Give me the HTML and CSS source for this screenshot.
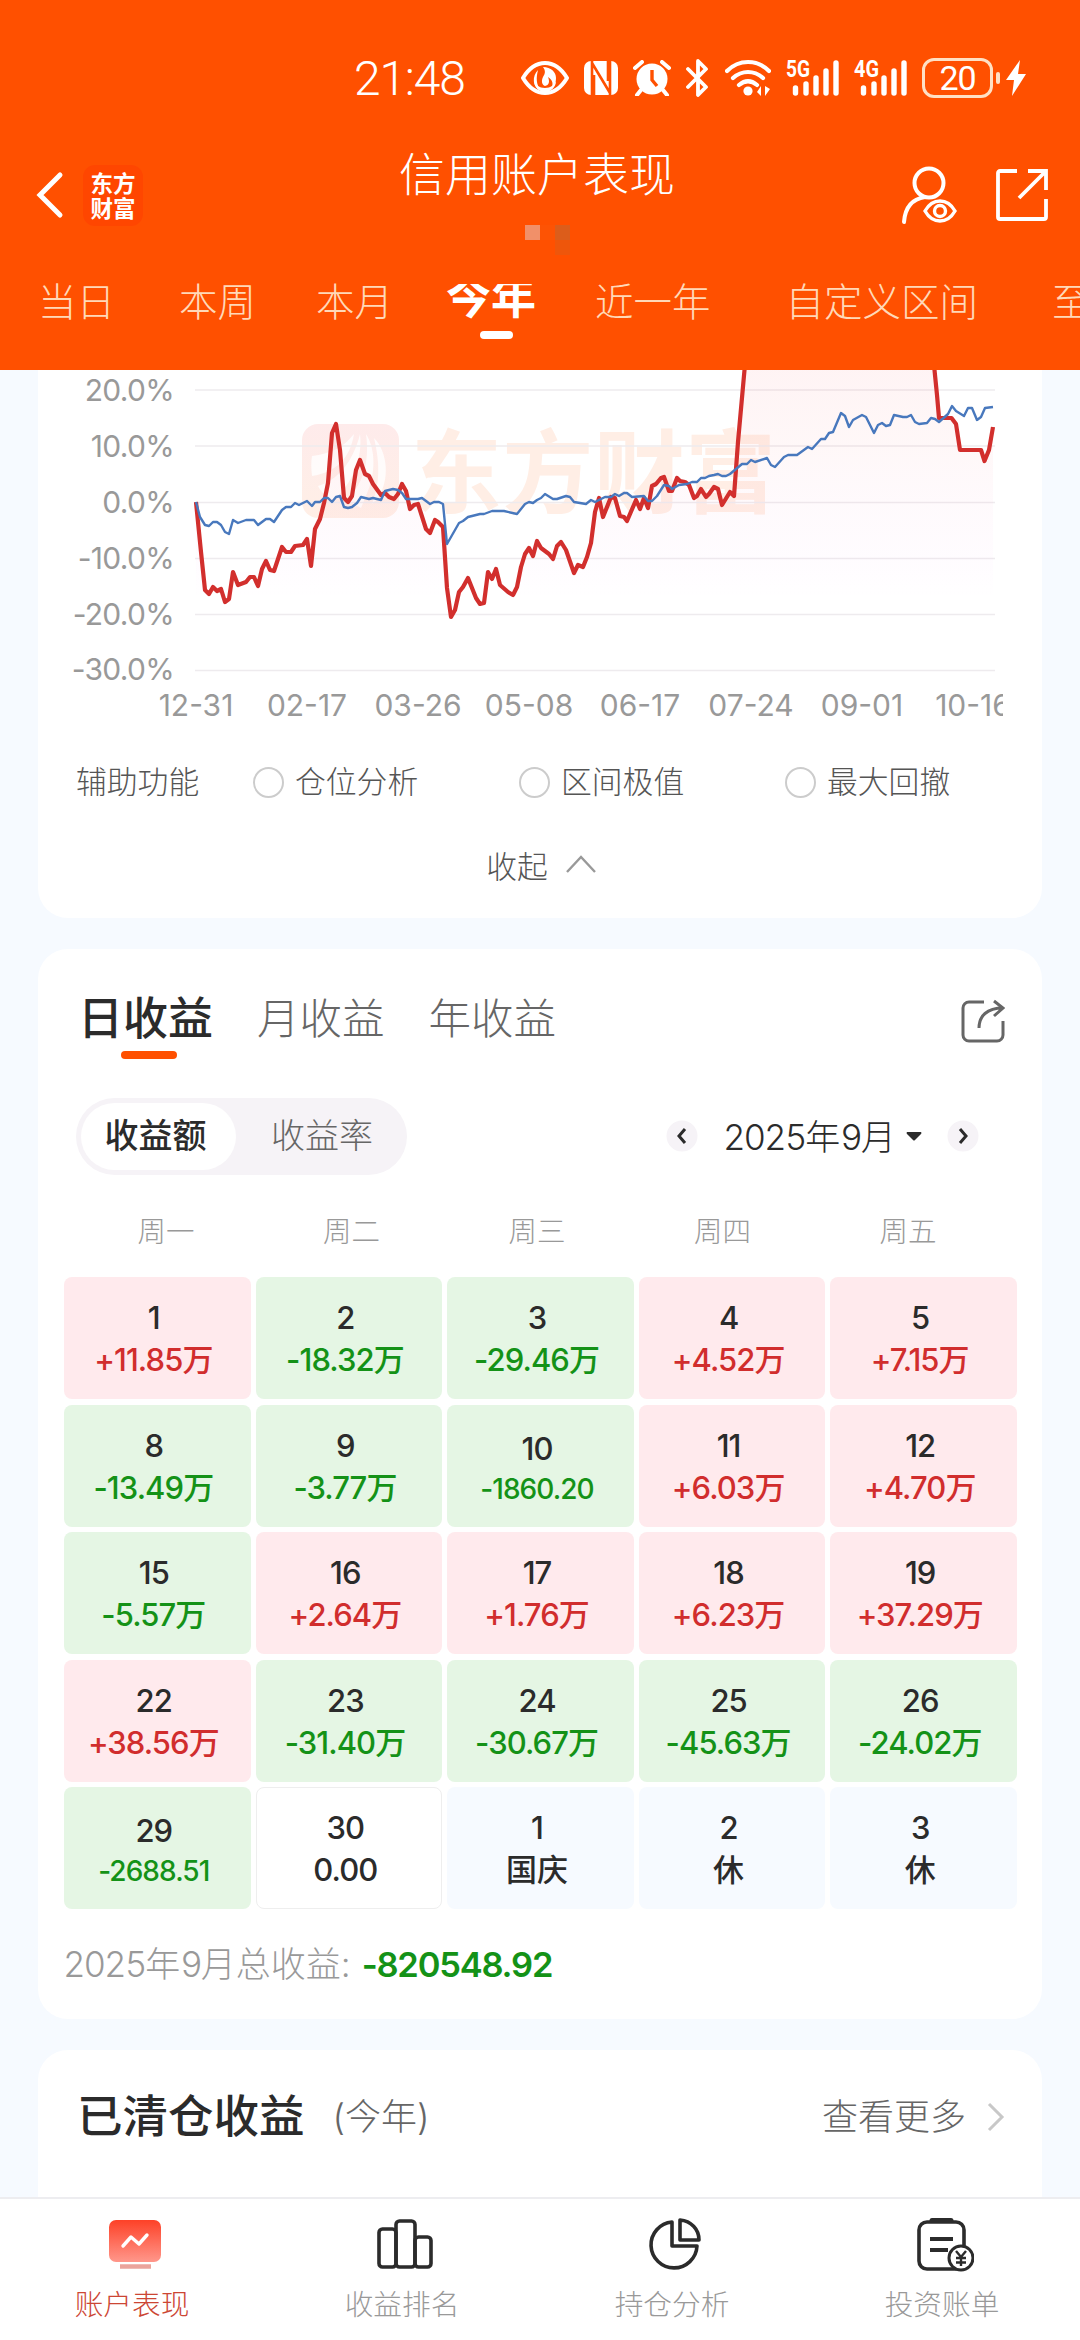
FILE: index.html
```html
<!DOCTYPE html>
<html lang="zh-CN">
  <head>
    <meta charset="UTF-8" />
    <meta name="viewport" content="width=device-width, initial-scale=1.0" />
    <title>信用账户表现</title>
    <link rel="stylesheet" href="styles.css">
  </head>
  <body>
    <header class="header">
      <div class="status-bar">
        <span class="clock">21:48</span>
        <svg class="eye" width="48" height="36" viewBox="0 0 48 36">
          <path d="M2 18C8 8 15 3 24 3s16 5 22 15c-6 10-13 15-22 15S8 28 2 18z" fill="none" stroke="#fff" stroke-width="4" stroke-linejoin="round" />
          <path d="M22 7c3 4 2 7 0 10-2 4-1 8 2 9 4-1 5-4 3-9 5 3 5 7 4 10 3-2 4-5 4-9 0-6-5-11-13-11zM17 10c-6 6-6 17 3 21-5-7-5-13-3-21z" fill="#fff" />
          <path d="M13 20c0 7 5 12 11 12s11-5 11-11c-2 4-5 7-11 7s-9-3-11-8z" fill="#fff" />
        </svg>
        <svg width="34" height="36" viewBox="0 0 34 36">
          <rect y="1" width="34" height="34" rx="7" fill="#fff" />
          <path d="M8 1v34M26 1v34M8 3l18 30M10 15v20M24 1v20" fill="none" stroke="#ff5000" stroke-width="2.6" />
        </svg>
        <svg width="38" height="36" viewBox="0 0 38 36">
          <circle cx="19" cy="19" r="15.500" fill="#fff" />
          <path d="M2 8l7-6M36 8l-7-6M8 30l-4 5M30 30l4 5" stroke="#fff" stroke-width="4" stroke-linecap="round" />
          <path d="M19 10v10l5 6" fill="none" stroke="#ff5000" stroke-width="3.400" />
        </svg>
        <svg width="24" height="38" viewBox="0 0 24 38">
          <path d="M2 10l18 18-8 8V2l8 8L2 28" fill="none" stroke="#fff" stroke-width="3.800" stroke-linejoin="round" stroke-linecap="round" />
        </svg>
        <svg width="46" height="38" viewBox="0 0 46 38">
          <path d="M2 12c12-12 30-12 42 0M8 19c9-8 21-8 30 0M14 26c6-5 12-5 18 0" fill="none" stroke="#fff" stroke-width="4.200" stroke-linecap="round" />
          <circle cx="23" cy="32" r="4.600" fill="#fff" />
          <path d="M36 27v10l-4-4zM40 27v10l5-7z" fill="#fff" />
        </svg>
        <svg class="signal" width="53" height="38" viewBox="0 0 53 38">
          <text class="net" x="0" y="18" textLength="24" lengthAdjust="spacingAndGlyphs">5G</text>
          <path d="M9.500 29v5M20 25v9M30 19v15M40 12v22M50 4v30" stroke="#fff" stroke-width="5.400" stroke-linecap="round" />
        </svg>
        <svg class="signal" width="53" height="38" viewBox="0 0 53 38">
          <text class="net" x="0" y="18" textLength="25" lengthAdjust="spacingAndGlyphs">4G</text>
          <path d="M9.500 29v5M20 25v9M30 19v15M40 12v22M50 4v30" stroke="#fff" stroke-width="5.400" stroke-linecap="round" />
        </svg>
        <span class="battery">20</span>
        <svg class="bolt" width="20" height="38" viewBox="0 0 20 38">
          <path d="M14 1L0 21h8L6 37l14-22h-8z" fill="#fff" />
        </svg>
      </div>

      <div class="title-bar">
        <svg class="back" width="28" height="48" viewBox="0 0 28 48">
          <path d="M24 4L4 24l20 20" fill="none" stroke="#fff" stroke-width="5" stroke-linecap="round" />
        </svg>
        <div class="brand"><span>东方</span><span>财富</span></div>
        <div class="title">
          <h1>信用账户表现</h1>
          <div class="blocks"><i></i><i></i><i></i><i></i></div>
        </div>
        <svg class="person" width="58" height="60" viewBox="0 0 58 60">
          <g fill="none" stroke="#fff" stroke-width="4">
            <circle cx="28" cy="18" r="14.500" />
            <path d="M3 57c1-14 8-23 21-25" stroke-linecap="round" />
            <path d="M24 46c4-7 9-10 15-10s11 3 15 10c-4 7-9 10-15 10s-11-3-15-10z" stroke-width="3.400" />
            <circle cx="39" cy="46" r="5.500" stroke-width="3.400" />
          </g>
        </svg>
        <svg class="open" width="54" height="54" viewBox="0 0 54 54">
          <path d="M22 3H5a2 2 0 0 0-2 2v44a2 2 0 0 0 2 2h44a2 2 0 0 0 2-2V31M33 3h18v19M50 4L24 30" fill="none" stroke="#fff" stroke-width="3.800" />
        </svg>
      </div>

      <nav class="periods">
        <span>当日</span>
        <span>本周</span>
        <span>本月</span>
        <span class="current"><b>今年</b></span>
        <span>近一年</span>
        <span>自定义区间</span>
        <span>至</span>
      </nav>
    </header>

    <main>
      <section class="card chart-card">
        <svg class="chart" width="1004" height="360" viewBox="38 370 1004 360">
          <defs>
            <linearGradient id="area" gradientUnits="userSpaceOnUse" x1="0" y1="370" x2="0" y2="600">
              <stop offset="0" stop-color="#f8303c" stop-opacity="0.055" />
              <stop offset="0.35" stop-color="#f8303c" stop-opacity="0.035" />
              <stop offset="0.85" stop-color="#f040f0" stop-opacity="0.015" />
              <stop offset="1" stop-color="#f040f0" stop-opacity="0" />
            </linearGradient>
            <linearGradient id="mark" x1="0" y1="0" x2="0" y2="1">
              <stop offset="0" stop-color="#feebeb" />
              <stop offset="1" stop-color="#ffefe6" />
            </linearGradient>
            <clipPath id="labels"><rect x="38" y="680" width="965" height="50" /></clipPath>
          </defs>

          <rect x="302" y="424" width="97" height="94" rx="16" fill="url(#mark)" />
          <path d="M312 456c18-2 32-9 42-22-4 24-17 38-42 42-1-8-1-14 0-20zM318 486c20-6 35-24 42-52 3 24-8 50-26 66-8-3-13-8-16-14zM346 500c16-14 24-36 20-66 10 16 10 40 0 62l-5 12zM374 438c14 14 16 42 4 60l-6 6c8-20 8-42 2-66z" fill="#fff" opacity=".8" />
          <text class="watermark" x="411" y="506" textLength="365">东方财富</text>

          <path class="grid" d="M195 390H995M195 446H995M195 502.500H995M195 558.500H995M195 614.500H995M195 670.500H995" />

          <path fill="url(#area)" d="M196 502L201 552 205 590 229 599 233 572 274 571 282 547 303 545 311 566 320 519 328 483 332 433 336 424 340 450 344 498 352 496 360 460 373 484 381 495 394 499 402 484 410 509 418 504 430 533 443 527 447 588 480 604 513 595 525 554 537 541 553 559 561 542 574 573 583 567 591 543 599 498 603 517 615 498 627 521 640 505 648 508 656 484 664 477 680 481 694 498 714 487 722 505 734 496 738 442 744.500 370V350H932L937 395 939 418H951L960 450H981L984 461 993 427V600H196Z" />
          <polyline class="mine" points="196,502 201,552 205,590 209,594 213,587 217,591 221,589 225,602 229,599 233,572 238,585 246,582 250,577 254,577 258,586 262,569 266,561 270,570 274,571 282,547 286,552 291,552 295,546 303,545 307,539 311,566 315,529 320,519 324,503 328,483 332,433 336,424 340,450 344,498 348,502 352,496 356,470 360,460 365,474 369,476 373,484 381,495 385,493 389,497 394,499 398,494 402,484 406,491 410,509 414,505 418,504 426,529 430,533 435,520 438,522 443,527 447,588 451,617 455,610 459,592 463,587 468,578 476,598 480,604 484,603 488,572 492,579 496,569 500,585 508,592 513,595 517,587 521,567 525,554 529,548 533,556 537,541 541,548 549,554 553,559 557,546 561,542 566,550 574,573 578,565 583,567 587,557 591,543 595,512 599,498 603,517 611,497 615,498 620,516 624,517 627,521 636,500 640,509 644,498 648,508 652,486 656,484 661,478 664,477 669,491 672,491 677,478 680,481 685,482 689,485 694,498 697,496 701,489 706,497 709,494 714,487 718,489 722,505 730,492 734,496 738,442 744.500,370 747,330 932,330 934.500,370 937,395 939,418 951.500,418 956,424 960,450 981,450 984.500,461 989,450 993,427" />
          <polyline class="index" points="196,502 200,517 205,525 209,526 213,522 217,522 221,525 225,532 229,534 233,520 238,523 246,520 254,520 258,525 266,519 270,519 274,522 282,510 286,507 291,507 295,503 299,505 307,501 312,506 315,502 320,502 324,498 328,498 332,502 336,497 340,496 344,507 348,508 352,507 357,503 361,497 369,499 373,498 381,500 385,491 393,489 398,490 402,493 406,499 418,499 422,498 430,504 434,502 439,502 443,504 447,544 451,537 459,523 463,521 468,517 480,514 484,514 492,511 504,511 517,514 525,504 529,502 533,503 537,500 541,498 545,494 553,499 557,499 566,496 570,497 574,502 586,504 591,500 595,502 605,497 611,497 615,494 619,496 624,493 627,493 632,497 644,496 648,501 652,501 657,496 664,485 669,486 672,489 679,485 687,484 692,482 697,482 701,478 705,478 709,476 714,475 718,474 722,476 726,476 730,474 742,464 747,464 751,460 755,462 767,458 771,465 775,467 784,457 788,455 797,455 808,447 812,449 821,439 825,439 829,433 833,432 841,413 845,416 849,427 853,420 862,415 866,417 874,433 878,425 882,423 886,426 890,425 894,415 903,417 907,417 911,415 915,422 919,424 927,423 931,418 935,419 939,422 948,414 952,406 956,411 964,416 968,408 972,408 977,420 981,417 985,408 993,407" />

          <g class="axis y-axis">
            <text x="174" y="401">20.0%</text>
            <text x="174" y="457">10.0%</text>
            <text x="174" y="513">0.0%</text>
            <text x="174" y="569">-10.0%</text>
            <text x="174" y="625">-20.0%</text>
            <text x="174" y="680">-30.0%</text>
          </g>
          <g class="axis x-axis" clip-path="url(#labels)">
            <text x="196" y="716">12-31</text>
            <text x="307" y="716">02-17</text>
            <text x="418" y="716">03-26</text>
            <text x="529" y="716">05-08</text>
            <text x="640" y="716">06-17</text>
            <text x="751" y="716">07-24</text>
            <text x="862" y="716">09-01</text>
            <text x="973" y="716">10-16</text>
          </g>
        </svg>
        <div class="helpers">
          <span class="helper-name">辅助功能</span>
          <label><i></i>仓位分析</label>
          <label><i></i>区间极值</label>
          <label><i></i>最大回撤</label>
        </div>
        <div class="collapse">
          收起
          <svg width="30" height="20" viewBox="0 0 30 20">
            <path d="M1 18L15 3l14 15" fill="none" stroke="#999" stroke-width="2.400" />
          </svg>
        </div>
      </section>

      <section class="card calendar-card">
        <div class="tabs">
          <b>日收益</b>
          <span>月收益</span>
          <span>年收益</span>
          <svg width="44" height="44" viewBox="0 0 44 44">
            <path d="M23 3H8a6 6 0 0 0-6 6v27a6 6 0 0 0 6 6h28a6 6 0 0 0 6-6V22M18 29c0-12 8-20 24-20M33 2l9 7-9 8" fill="none" stroke="#666" stroke-width="3" />
          </svg>
        </div>

        <div class="toolbar">
          <div class="switch"><b>收益额</b><span>收益率</span></div>
          <div class="month">
            <svg class="step" width="32" height="32" viewBox="0 0 32 32">
              <circle cx="16" cy="16" r="15.500" /><path d="M19 9l-6 7 6 7" />
            </svg>
            <span class="month-name"><em>2025</em>年<em>9</em>月</span>
            <svg class="caret" width="16" height="9" viewBox="0 0 16 9"><path d="M1 0h14q1 1 0 2L9 8q-1 1-2 0L1 2Q0 1 1 0z" fill="#2b2b2b" /></svg>
            <svg class="step" width="32" height="32" viewBox="0 0 32 32">
              <circle cx="16" cy="16" r="15.500" /><path d="M13 9l6 7-6 7" />
            </svg>
          </div>
        </div>

        <div class="weekdays">
          <span>周一</span><span>周二</span><span>周三</span><span>周四</span><span>周五</span>
        </div>

        <div class="days">
          <div class="day up"><b>1</b><span>+11.85<u>万</u></span></div>
          <div class="day down"><b>2</b><span>-18.32<u>万</u></span></div>
          <div class="day down"><b>3</b><span>-29.46<u>万</u></span></div>
          <div class="day up"><b>4</b><span>+4.52<u>万</u></span></div>
          <div class="day up"><b>5</b><span>+7.15<u>万</u></span></div>

          <div class="day down"><b>8</b><span>-13.49<u>万</u></span></div>
          <div class="day down"><b>9</b><span>-3.77<u>万</u></span></div>
          <div class="day down small"><b>10</b><span>-1860.20</span></div>
          <div class="day up"><b>11</b><span>+6.03<u>万</u></span></div>
          <div class="day up"><b>12</b><span>+4.70<u>万</u></span></div>

          <div class="day down"><b>15</b><span>-5.57<u>万</u></span></div>
          <div class="day up"><b>16</b><span>+2.64<u>万</u></span></div>
          <div class="day up"><b>17</b><span>+1.76<u>万</u></span></div>
          <div class="day up"><b>18</b><span>+6.23<u>万</u></span></div>
          <div class="day up"><b>19</b><span>+37.29<u>万</u></span></div>

          <div class="day up"><b>22</b><span>+38.56<u>万</u></span></div>
          <div class="day down"><b>23</b><span>-31.40<u>万</u></span></div>
          <div class="day down"><b>24</b><span>-30.67<u>万</u></span></div>
          <div class="day down"><b>25</b><span>-45.63<u>万</u></span></div>
          <div class="day down"><b>26</b><span>-24.02<u>万</u></span></div>

          <div class="day down small"><b>29</b><span>-2688.51</span></div>
          <div class="day flat"><b>30</b><span>0.00</span></div>
          <div class="day rest"><b>1</b><span><u>国庆</u></span></div>
          <div class="day rest"><b>2</b><span><u>休</u></span></div>
          <div class="day rest"><b>3</b><span><u>休</u></span></div>
        </div>

        <div class="total">
          <span><em>2025</em>年<em>9</em>月总收益:</span>
          <b>-820548.92</b>
        </div>
      </section>

      <section class="card closed-card">
        <h2>已清仓收益</h2>
        <span class="range">(今年)</span>
        <span class="more">查看更多</span>
        <svg width="18" height="30" viewBox="0 0 18 30">
          <path d="M2 2l13 13L2 28" fill="none" stroke="#c8c8c8" stroke-width="3" />
        </svg>
      </section>
    </main>

    <nav class="bottom-nav">
      <div class="item active">
        <svg width="58" height="56" viewBox="0 0 58 56">
          <defs>
            <linearGradient id="screen" x1="0" y1="0" x2="0" y2="1">
              <stop offset="0" stop-color="#fd4127" />
              <stop offset="1" stop-color="#ff978b" />
            </linearGradient>
          </defs>
          <rect x="3" y="3" width="52" height="42" rx="7" fill="url(#screen)" />
          <path d="M17 29l8-9 8 7 8-9" fill="none" stroke="#fff" stroke-width="3.400" stroke-linecap="round" stroke-linejoin="round" />
          <path d="M14 49.500h31" stroke="#eba49c" stroke-width="4.500" />
        </svg>
        <span>账户表现</span>
      </div>
      <div class="item">
        <svg width="58" height="56" viewBox="0 0 58 56">
          <g fill="none" stroke="#2b2b2b" stroke-width="3.600">
            <rect x="3" y="12" width="17" height="38" rx="3.500" />
            <rect x="20" y="4" width="19" height="46" rx="3.500" />
            <rect x="39" y="20" width="16" height="30" rx="3.500" />
          </g>
        </svg>
        <span>收益排名</span>
      </div>
      <div class="item">
        <svg width="58" height="56" viewBox="0 0 58 56">
          <g fill="none" stroke="#2b2b2b" stroke-width="3.600" stroke-linejoin="round">
            <path d="M26 5a23 23 0 1 0 25 24H26z" />
            <path d="M34 3v20h19C53 12 45 4 34 3z" />
          </g>
        </svg>
        <span>持仓分析</span>
      </div>
      <div class="item">
        <svg width="58" height="56" viewBox="0 0 58 56">
          <g fill="none" stroke="#2b2b2b" stroke-width="3.600">
            <rect x="3" y="5" width="45" height="47" rx="8" />
            <path d="M16 3.500h19" stroke-width="5" stroke-linecap="round" />
            <path d="M14 22h23M14 33h18" stroke-width="4" />
            <circle cx="45" cy="41" r="12" fill="#fff" stroke-width="3" />
            <path d="M40 34l5 6 5-6M45 40v9M40 41h10M40 45.500h10" stroke-width="2.400" />
          </g>
        </svg>
        <span>投资账单</span>
      </div>
    </nav>
  </body>
</html>
```

FILE: styles.css
```css
* {
  box-sizing: border-box;
}
body {
  margin: 0;
  width: 1080px;
  height: 2340px;
  overflow: hidden;
  display: flex;
  flex-direction: column;
  background: #f6faff;
  color: #2b2b2b;
  font-family: "Inter", "Noto Sans CJK SC", sans-serif;
  font-weight: 300;
}
h1,
h2 {
  margin: 0;
}
em,
i {
  font-style: normal;
}
svg {
  display: block;
  flex: none;
}

/* header */
.header {
  flex: none;
  height: 370px;
  background: #ff5000;
  color: #fff;
  overflow: hidden;
}
.status-bar {
  height: 130px;
  padding: 26px 0 0 354px;
  display: flex;
  align-items: center;
  gap: 15px;
}
.clock {
  width: 152px;
  font-family: "Roboto", sans-serif;
  font-size: 48px;
  letter-spacing: -1.200px;
}
.signal {
  overflow: visible;
}
.net {
  font: 700 24px "Roboto", sans-serif;
  fill: #fff;
}
.battery {
  position: relative;
  width: 71px;
  height: 40px;
  border: 3px solid #ffe0c4;
  border-radius: 12px;
  font-family: "Roboto", sans-serif;
  font-size: 34px;
  font-weight: 400;
  line-height: 35px;
  text-align: center;
  letter-spacing: -1px;
}
.battery::after {
  content: "";
  position: absolute;
  right: -10px;
  top: 11px;
  width: 4px;
  height: 12px;
  border-radius: 2px;
  background: #ffe0c4;
}
.bolt {
  margin-left: -2px;
}
.title-bar {
  height: 130px;
  display: flex;
  align-items: center;
  padding: 0 31px 0 36px;
}
.brand {
  width: 60px;
  height: 61px;
  margin-left: 19px;
  padding-top: 6px;
  border-radius: 12px;
  background: #ff4600;
  display: flex;
  flex-direction: column;
  align-items: center;
  font-size: 22.500px;
  font-weight: 700;
  line-height: 25px;
}
.title {
  flex: 1;
  align-self: stretch;
  padding: 14px 0 0 256px;
}
.title h1 {
  font-size: 46px;
  font-weight: 300;
  line-height: 60px;
  white-space: nowrap;
}
.blocks {
  display: grid;
  grid-template-columns: 15px 15px 15px;
  grid-auto-rows: 15px;
  margin: 21px 0 0 126px;
}
.blocks i:nth-child(1) {
  background: #f19069;
}
.blocks i:nth-child(2) {
  background: #fd5304;
}
.blocks i:nth-child(3) {
  background: #dc5d1b;
}
.blocks i:nth-child(4) {
  grid-column: 3;
  background: #ee560b;
}
.person {
  margin-right: 36px;
}
.periods {
  height: 110px;
  padding-left: 38px;
  display: flex;
  white-space: nowrap;
  font-size: 38.500px;
  line-height: 85px;
  color: #ffd9b8;
}
.periods span {
  flex: none;
  margin-right: 64px;
}
.periods span:nth-child(2) {
  margin-right: 60px;
}
.periods span:nth-child(3) {
  margin-right: 53px;
}
.periods span:nth-child(5) {
  margin-right: 75px;
}
.periods span:nth-child(6) {
  margin-right: 74px;
}
.periods .current {
  width: 92px;
  height: 56px;
  margin-top: 24px;
  margin-right: 57px;
  overflow: hidden;
  color: #fff;
}
.current b {
  display: block;
  height: 47px;
  margin-top: 0;
  font-size: 45px;
  font-weight: 700;
  line-height: 28px;
}
.current::after {
  content: "";
  display: block;
  width: 33px;
  height: 8px;
  margin-left: 34px;
  border-radius: 4px;
  background: #fff;
}

/* cards */
main {
  flex: 1;
  min-height: 0;
  overflow: hidden;
  padding: 0 38px;
}
.card {
  background: #fff;
  border-radius: 30px;
}
.chart-card {
  height: 548px;
  border-radius: 0 0 30px 30px;
}
.grid {
  stroke: #eeebee;
  stroke-width: 1.500;
}
.watermark {
  font: 700 91px "Noto Sans CJK SC", sans-serif;
  fill: #ffeee5;
}
.mine {
  fill: none;
  stroke: #d22f2d;
  stroke-width: 4.200;
  stroke-linejoin: round;
}
.index {
  fill: none;
  stroke: #4878bd;
  stroke-width: 2.400;
  stroke-linejoin: round;
}
.axis {
  font-size: 30px;
  font-weight: 400;
  fill: #999;
}
.y-axis {
  text-anchor: end;
  letter-spacing: -0.700px;
}
.x-axis {
  text-anchor: middle;
}
.helpers {
  display: flex;
  align-items: center;
  height: 106px;
  padding-left: 38px;
  font-size: 30.800px;
  line-height: 44px;
  color: #555;
}
.helper-name {
  flex: none;
  width: 177px;
  margin-top: -3px;
}
.helpers label {
  flex: none;
  display: flex;
  align-items: center;
  width: 266px;
  margin-top: -2px;
}
.helpers i {
  width: 31px;
  height: 31px;
  margin-right: 11px;
  border: 2.500px solid #ccc;
  border-radius: 50%;
}
.collapse {
  display: flex;
  justify-content: center;
  align-items: center;
  gap: 18px;
  height: 56px;
  padding-left: 2px;
  font-size: 30.800px;
  color: #555;
}

/* calendar */
.calendar-card {
  height: 1070px;
  margin-top: 31px;
  overflow: hidden;
}
.tabs {
  display: flex;
  align-items: center;
  height: 146px;
  padding: 0 37px 0 40px;
  font-size: 42.500px;
  line-height: 60px;
  color: #666;
}
.tabs b {
  position: relative;
  margin-top: -6px;
  font-size: 45px;
  font-weight: 500;
  color: #2b2b2b;
}
.tabs b::after {
  content: "";
  position: absolute;
  left: 43px;
  bottom: -10px;
  width: 56px;
  height: 8px;
  border-radius: 4px;
  background: #ff5000;
}
.tabs span {
  margin: -6px 0 0 44px;
}
.tabs svg {
  margin: -2px 0 0 auto;
}
.toolbar {
  display: flex;
  justify-content: space-between;
  align-items: center;
  height: 84px;
  padding: 0 63px 0 38px;
}
.switch {
  display: flex;
  width: 331px;
  height: 77px;
  margin-top: -1px;
  padding: 5px;
  border-radius: 39px;
  background: #f6f3f7;
  font-size: 34px;
  line-height: 66px;
  text-align: center;
  color: #666;
}
.switch b {
  width: 155px;
  height: 67px;
  padding-right: 6px;
  border-radius: 34px;
  background: #fff;
  font-weight: 500;
  color: #2b2b2b;
}
.switch span {
  flex: 1;
  padding-left: 6px;
}
.month {
  display: flex;
  align-items: center;
  margin-top: -2px;
}
.month-name {
  margin: -3px 0 0 25px;
  width: 168px;
  font-size: 35px;
  white-space: nowrap;
}
.month-name em,
.total em {
  font-feature-settings: "tnum";
  letter-spacing: -0.060em;
}
.caret {
  margin: 0 25px 0 15px;
}
.step circle {
  fill: #f6f3f7;
}
.step path {
  fill: none;
  stroke: #2b2b2b;
  stroke-width: 3;
}
.weekdays {
  display: grid;
  grid-template-columns: repeat(5, 185.500px);
  justify-content: center;
  margin-left: -6px;
  padding-top: 33px;
  height: 98px;
  font-size: 28.500px;
  line-height: 40px;
  text-align: center;
  color: #999;
}
.days {
  display: grid;
  grid-template-columns: repeat(5, 1fr);
  grid-auto-rows: 122px;
  gap: 5.500px 5px;
  padding: 0 25px 0 26px;
}
.day {
  display: flex;
  flex-direction: column;
  align-items: center;
  padding: 20px 7px 0 0;
  border-radius: 8px;
  font-size: 31px;
  letter-spacing: -0.030em;
  line-height: 42px;
}
.day b,
.day span {
  font-weight: 500;
}
.day u {
  text-decoration: none;
  letter-spacing: 0;
}
.small {
  padding-top: 23px;
}
.small span {
  font-size: 28px;
  line-height: 38px;
}
.up {
  background: #ffeaed;
}
.up span {
  color: #d12d2d;
}
.down {
  background: #e5f6e4;
}
.down span {
  color: #149217;
}
.flat {
  border: 1px solid #eee;
  padding-top: 19px;
}
.rest {
  background: #f6faff;
}
.total {
  display: flex;
  align-items: center;
  height: 114px;
  padding-left: 25px;
  font-size: 35px;
  line-height: 50px;
  color: #999;
}
.total span {
  margin-top: -5px;
}
.total b {
  margin: -2px 0 0 11px;
  font-size: 34.500px;
  font-weight: 600;
  letter-spacing: -0.035em;
  color: #149217;
}

/* closed positions */
.closed-card {
  display: flex;
  height: 200px;
  margin-top: 31px;
  padding: 0 37px 0 39px;
  font-size: 36px;
  line-height: 134px;
  color: #666;
}
.closed-card h2 {
  font-size: 45.500px;
  font-weight: 500;
  color: #2b2b2b;
}
.range {
  margin-left: 28px;
}
.more {
  margin-left: auto;
}
.closed-card svg {
  margin: 52px 0 0 21px;
}

/* bottom navigation */
.bottom-nav {
  flex: none;
  height: 143px;
  display: grid;
  grid-template-columns: repeat(4, 1fr);
  border-top: 2px solid #ededf0;
  background: #fff;
  font-size: 28.700px;
  color: #999;
}
.item {
  display: flex;
  flex-direction: column;
  align-items: center;
  padding-top: 18px;
}
.item span {
  margin-top: 12px;
  padding-right: 6px;
  line-height: 40px;
}
.active span {
  color: #cc4634;
}
```
